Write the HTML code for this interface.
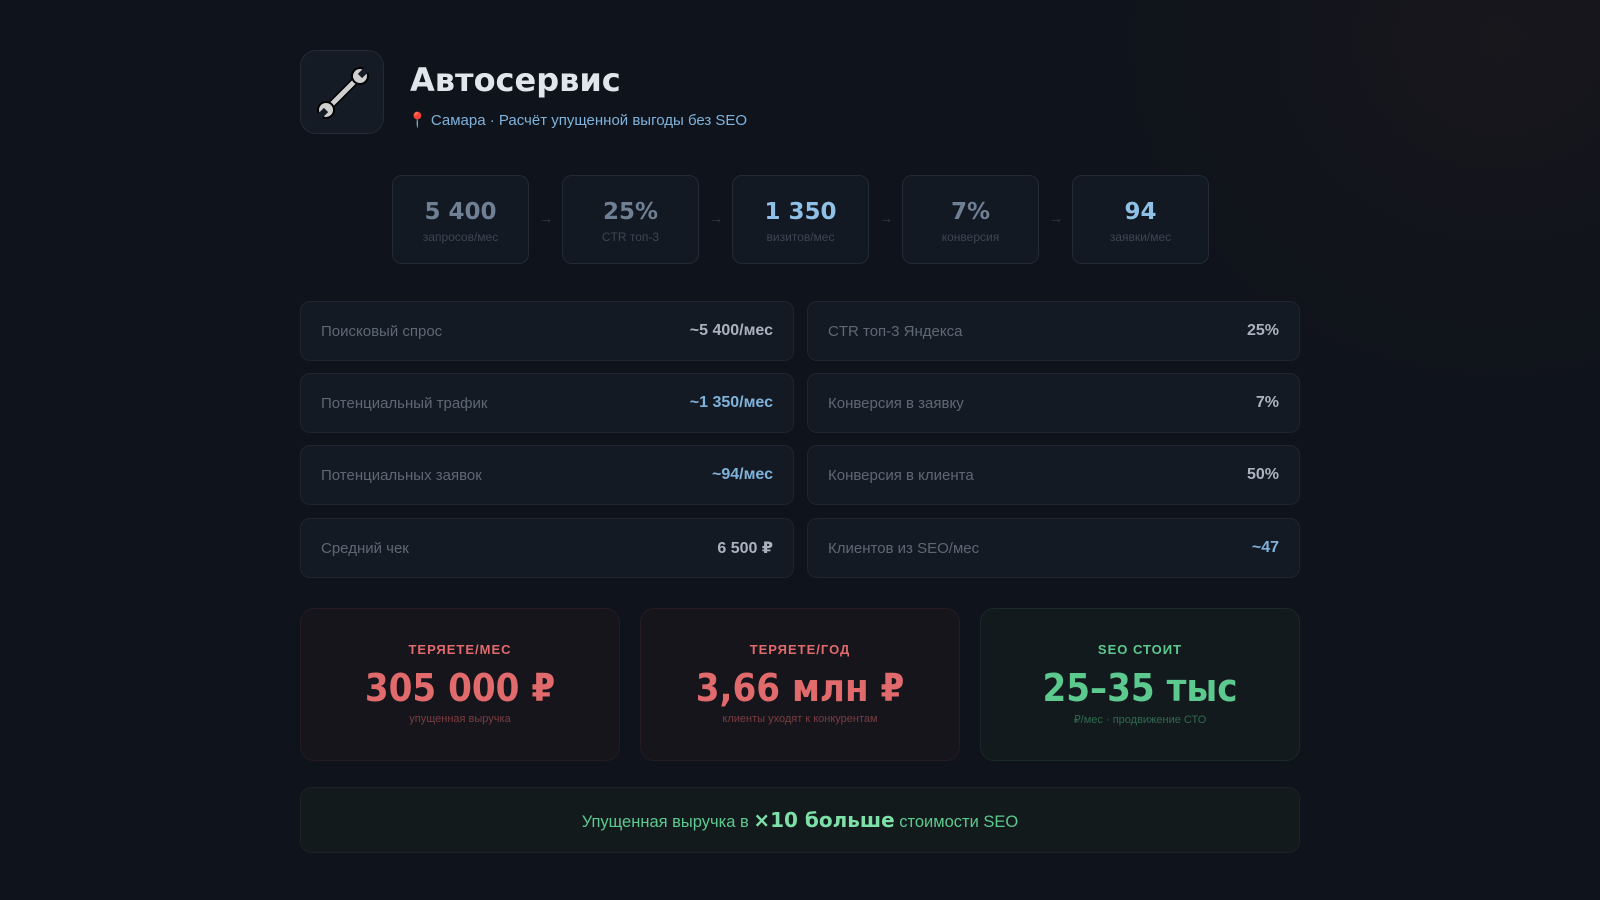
<!DOCTYPE html>
<html><head><meta charset="utf-8"><style>
*{box-sizing:border-box;margin:0;padding:0}
body{width:1600px;height:900px;background:#0f131b;font-family:"Liberation Sans","DejaVu Sans",sans-serif;color:#c9d1d9;position:relative;overflow:hidden}
body:before{content:"";position:absolute;right:0;top:0;width:500px;height:400px;background:radial-gradient(ellipse at 80% 10%,rgba(40,30,30,.35),transparent 70%)}
.abs{position:absolute}
.icon{left:300px;top:50px;width:84px;height:84px;border:1px solid #222a36;border-radius:16px;background:#151b25}
h1{left:410px;top:61px;font-family:"DejaVu Sans",sans-serif;font-size:32px;font-weight:bold;color:#e1e6ec}
.sub{left:408px;top:111px;font-size:15px;color:#7fb3dc}
.f{top:175px;width:137px;height:89px;border:1px solid #222a36;border-radius:10px;background:#131922;text-align:center}
.f b{display:block;margin-top:23px;font-family:"DejaVu Sans",sans-serif;font-size:23px;color:#6f7f94}
.f span{display:block;margin-top:5px;font-size:12px;color:#3c4654}
.ar{top:210px;color:#343d4a;font-size:14px}
.r{height:60px;border:1px solid #1f2631;border-radius:10px;background:#141a23;display:flex;justify-content:space-between;align-items:center;padding:0 20px;font-size:15px}
.r .l{color:#5e6875}.r .v{color:#aab3bf;font-weight:bold;font-size:16px}
.r .v.b{color:#7fb3dc}
.c{top:608px;width:320px;height:153px;border-radius:14px;text-align:center}
.c .t{margin-top:33px;font-size:13px;font-weight:bold;letter-spacing:1px}
.c .n{margin-top:9px;font-family:"DejaVu Sans Condensed","DejaVu Sans",sans-serif;font-size:38px;font-weight:bold}
.c .s{margin-top:3px;font-size:11px}
.red{background:#17151c;border:1px solid #261b22}.red .t,.red .n{color:#e06a6c}.red .s{color:#7a3c40}
.grn{background:#131a1e;border:1px solid #1a2a26}.grn .t,.grn .n{color:#5cc98f}.grn .s{color:#2f6a4c}
.ban{left:300px;top:787px;width:1000px;height:66px;border:1px solid #1a2326;border-radius:12px;background:#121a1c;text-align:center;line-height:64px;font-size:16.5px;color:#5cc98f}
.ban b{font-family:"DejaVu Sans",sans-serif;font-size:20px;color:#7de0a8}
</style></head><body>
<div class="abs icon"><svg width="84" height="84" viewBox="0 0 84 84"><g transform="rotate(-45 42 42)"><rect x="20" y="38" width="44" height="8" rx="3" fill="#000"/><rect x="22" y="39.5" width="40" height="5" rx="2" fill="#cfcfcf"/><circle cx="18" cy="42" r="9" fill="#000"/><circle cx="18" cy="42" r="7" fill="#cfcfcf"/><rect x="8" y="39" width="10" height="6" fill="#151b25"/><circle cx="66" cy="42" r="9" fill="#000"/><circle cx="66" cy="42" r="7" fill="#cfcfcf"/><rect x="66" y="39" width="10" height="6" fill="#151b25"/></g></svg></div>
<h1 class="abs">Автосервис</h1>
<div class="abs sub"><span style="color:#e04040">📍</span> Самара · Расчёт упущенной выгоды без SEO</div>

<div class="abs f" style="left:392px"><b>5 400</b><span>запросов/мес</span></div>
<div class="abs ar" style="left:539px">→</div>
<div class="abs f" style="left:562px"><b>25%</b><span>CTR топ-3</span></div>
<div class="abs ar" style="left:709px">→</div>
<div class="abs f" style="left:732px"><b style="color:#8fc0e6">1 350</b><span>визитов/мес</span></div>
<div class="abs ar" style="left:879px">→</div>
<div class="abs f" style="left:902px"><b>7%</b><span>конверсия</span></div>
<div class="abs ar" style="left:1049px">→</div>
<div class="abs f" style="left:1072px"><b style="color:#8fc0e6">94</b><span>заявки/мес</span></div>

<div class="abs r" style="left:300px;top:301px;width:494px"><span class="l">Поисковый спрос</span><span class="v">~5 400/мес</span></div>
<div class="abs r" style="left:807px;top:301px;width:493px"><span class="l">CTR топ-3 Яндекса</span><span class="v">25%</span></div>
<div class="abs r" style="left:300px;top:373px;width:494px"><span class="l">Потенциальный трафик</span><span class="v b">~1 350/мес</span></div>
<div class="abs r" style="left:807px;top:373px;width:493px"><span class="l">Конверсия в заявку</span><span class="v">7%</span></div>
<div class="abs r" style="left:300px;top:445px;width:494px"><span class="l">Потенциальных заявок</span><span class="v b">~94/мес</span></div>
<div class="abs r" style="left:807px;top:445px;width:493px"><span class="l">Конверсия в клиента</span><span class="v">50%</span></div>
<div class="abs r" style="left:300px;top:518px;width:494px"><span class="l">Средний чек</span><span class="v">6 500 ₽</span></div>
<div class="abs r" style="left:807px;top:518px;width:493px"><span class="l">Клиентов из SEO/мес</span><span class="v b">~47</span></div>

<div class="abs c red" style="left:300px"><div class="t">ТЕРЯЕТЕ/МЕС</div><div class="n">305 000 ₽</div><div class="s">упущенная выручка</div></div>
<div class="abs c red" style="left:640px"><div class="t">ТЕРЯЕТЕ/ГОД</div><div class="n">3,66 млн ₽</div><div class="s">клиенты уходят к конкурентам</div></div>
<div class="abs c grn" style="left:980px"><div class="t">SEO СТОИТ</div><div class="n">25–35 тыс</div><div class="s">₽/мес · продвижение СТО</div></div>

<div class="abs ban">Упущенная выручка в <b>×10 больше</b> стоимости SEO</div>
</body></html>
